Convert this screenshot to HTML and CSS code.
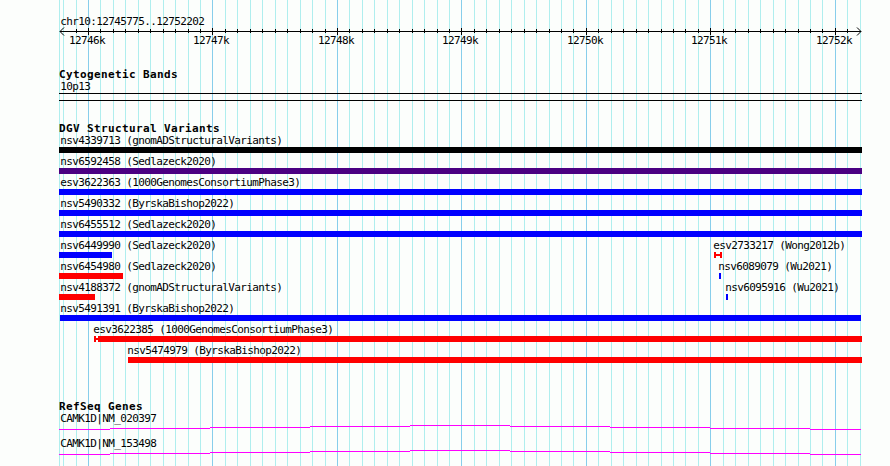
FILE: index.html
```
<!DOCTYPE html>
<html lang="en">
<head>
  <meta charset="UTF-8" />
  <meta name="viewport" content="width=device-width, initial-scale=1.0"/>
  <title>chr10:12745775..12752202</title>
  <link rel="stylesheet" href="styles.css">
</head>
<body>
  <div class="browser">
    <svg class="grid" id="grid" width="890" height="466" shape-rendering="crispEdges"></svg>

    <main class="tracks">
      <section class="overview">
        <div class="label">chr10:12745775..12752202</div>
        <svg class="ruler" id="ruler" width="803" height="22"></svg>
      </section>

      <section class="cytobands">
        <h2>Cytogenetic Bands</h2>
        <div class="label">10p13</div>
        <div class="band"></div>
      </section>

      <section class="variants">
        <h2>DGV Structural Variants</h2>
        <div id="variants"></div>
      </section>

      <section class="genes">
        <h2>RefSeq Genes</h2>
        <div class="gene">
          <div class="label">CAMK1D|NM_020397</div>
          <svg class="intron" width="803" height="5" shape-rendering="crispEdges">
            <path d="M0 4h51v1H0zM51 3h100v1H51zM151 2h100v1H151zM251 1h100v1H251zM351 0h100v1H351zM451 1h100v1H451zM551 2h100v1H551zM651 3h100v1H651zM751 4h51v1H751z"/>
          </svg>
        </div>
        <div class="gene">
          <div class="label">CAMK1D|NM_153498</div>
          <svg class="intron" width="803" height="5" shape-rendering="crispEdges">
            <path d="M0 4h51v1H0zM51 3h100v1H51zM151 2h100v1H151zM251 1h100v1H251zM351 0h100v1H351zM451 1h100v1H451zM551 2h100v1H551zM651 3h100v1H651zM751 4h51v1H751z"/>
          </svg>
        </div>
      </section>
    </main>
  </div>

  <script>
    const start = 12745775;
    const end = 12752202;
    const left = 59;

    function toX(pos) {
      return Math.round(60 + (pos - start) * 800 / (end - start));
    }

    // grid lines and ruler ticks, one every 100 bp
    let lines = '<rect class="minor" x="59" y="0" width="1" height="466"/>';
    let ticks = '<path class="axis" d="M1 9.5H802M5 5.5L1 9.5L5 13.5M798 5.5L802 9.5L798 13.5"/>';

    for (let pos = 12745800; pos <= end; pos += 100) {
      const x = toX(pos);
      const major = pos % 1000 === 0;
      lines += `<rect class="${major ? 'major' : 'minor'}" x="${x}" y="0" width="1" height="466"/>`;
      if (pos > 12745800 && pos < 12752200) {
        ticks += `<rect x="${x - left}" y="${major ? 6 : 7}" width="1" height="${major ? 7 : 4}"/>`;
      }
      if (major) {
        ticks += `<text x="${x - left - 19}" y="22">${pos / 1000}k</text>`;
      }
    }
    document.getElementById('grid').innerHTML = lines;
    document.getElementById('ruler').innerHTML = ticks;

    // x = left edge of the bar, w = its width, t = left edge of the name
    const rows = [
      [{ name: 'nsv4339713 (gnomADStructuralVariants)', x: 0, w: 803, t: 1, color: 'black' }],
      [{ name: 'nsv6592458 (Sedlazeck2020)', x: 0, w: 803, t: 1, color: 'purple' }],
      [{ name: 'esv3622363 (1000GenomesConsortiumPhase3)', x: 0, w: 803, t: 1, color: 'blue' }],
      [{ name: 'nsv5490332 (ByrskaBishop2022)', x: 0, w: 803, t: 1, color: 'blue' }],
      [{ name: 'nsv6455512 (Sedlazeck2020)', x: 0, w: 803, t: 1, color: 'blue' }],
      [{ name: 'nsv6449990 (Sedlazeck2020)', x: 0, w: 53, t: 1, color: 'blue' },
       { name: 'esv2733217 (Wong2012b)', x: 655, w: 8, t: 654, color: 'range' }],
      [{ name: 'nsv6454980 (Sedlazeck2020)', x: 0, w: 64, t: 1, color: 'red' },
       { name: 'nsv6089079 (Wu2021)', x: 660, w: 2, t: 659, color: 'blue' }],
      [{ name: 'nsv4188372 (gnomADStructuralVariants)', x: 0, w: 36, t: 1, color: 'red' },
       { name: 'nsv6095916 (Wu2021)', x: 667, w: 2, t: 666, color: 'blue' }],
      [{ name: 'nsv5491391 (ByrskaBishop2022)', x: 1, w: 801, t: 1, color: 'blue' }],
      [{ name: 'esv3622385 (1000GenomesConsortiumPhase3)', x: 35, w: 768, t: 34, color: 'red partial' }],
      [{ name: 'nsv5474979 (ByrskaBishop2022)', x: 69, w: 734, t: 68, color: 'red' }]
    ];

    document.getElementById('variants').innerHTML = rows.map(row =>
      '<div class="row">' + row.map(v =>
        `<div class="variant">
          <div class="label" style="margin-left: ${v.t}px">${v.name}</div>
          <div class="bar ${v.color}" style="margin-left: ${v.x}px; width: ${v.w}px"></div>
        </div>`).join('') + '</div>'
    ).join('');
  </script>
</body>
</html>
```
FILE: styles.css
```
* {
  margin: 0;
  padding: 0;
  box-sizing: border-box;
}

body {
  background: #fcfefc;
  color: #000;
  font-family: 'DejaVu Sans Mono', monospace;
  font-size: 11px;
  overflow: hidden;
}

.browser {
  position: relative;
  width: 890px;
  height: 466px;
}

/* the grid runs behind every track */
.grid {
  position: absolute;
  top: 0;
  left: 0;
}

.minor {
  fill: #afeeee;
}

.major {
  fill: #87ceeb;
}

.tracks {
  position: relative;
  width: 803px;
  margin-left: 59px;
  padding-top: 15px;
}

h2 {
  height: 12px;
  font-size: 11px;
  line-height: 13px;
  letter-spacing: 0.38px;
  white-space: pre;
}

.label {
  height: 12px;
  margin-left: 1px;
  line-height: 13px;
  letter-spacing: -0.622px;
  text-indent: 0.3px;
  white-space: pre;
}

.overview {
  height: 53px;
}

.ruler {
  display: block;
  margin-top: -5px;
  overflow: visible;
  letter-spacing: -0.622px;
}

.axis {
  fill: none;
  stroke: #000;
}

.cytobands {
  height: 54px;
}

.band {
  height: 8px;
  margin-top: 1px;
  border-top: 1px solid #000;
  border-bottom: 1px solid #000;
}

.variants {
  height: 278px;
}

.row {
  display: grid;
  height: 21px;
}

.variant {
  grid-area: 1 / 1;
}

.bar {
  height: 6px;
  margin-top: 1px;
}

.black {
  background: #000;
}

.purple {
  background: #4b0082;
}

.blue {
  background: #00f;
}

.red {
  background: #f00;
}

/* uncertain breakpoints: end caps joined by a thin line */
.range {
  border: solid #f00;
  border-width: 0 2px;
  background: linear-gradient(#f00, #f00) 0 2px / 100% 2px no-repeat;
}

.partial {
  background:
    linear-gradient(#f00, #f00) 0 0 / 2px 6px no-repeat,
    linear-gradient(#f00, #f00) 0 2px / 4px 2px no-repeat,
    linear-gradient(#f00, #f00) 4px 0 / 100% 6px no-repeat;
}

.gene {
  height: 25px;
}

.intron {
  display: block;
  margin-top: 1px;
  fill: #f0f;
}
```
